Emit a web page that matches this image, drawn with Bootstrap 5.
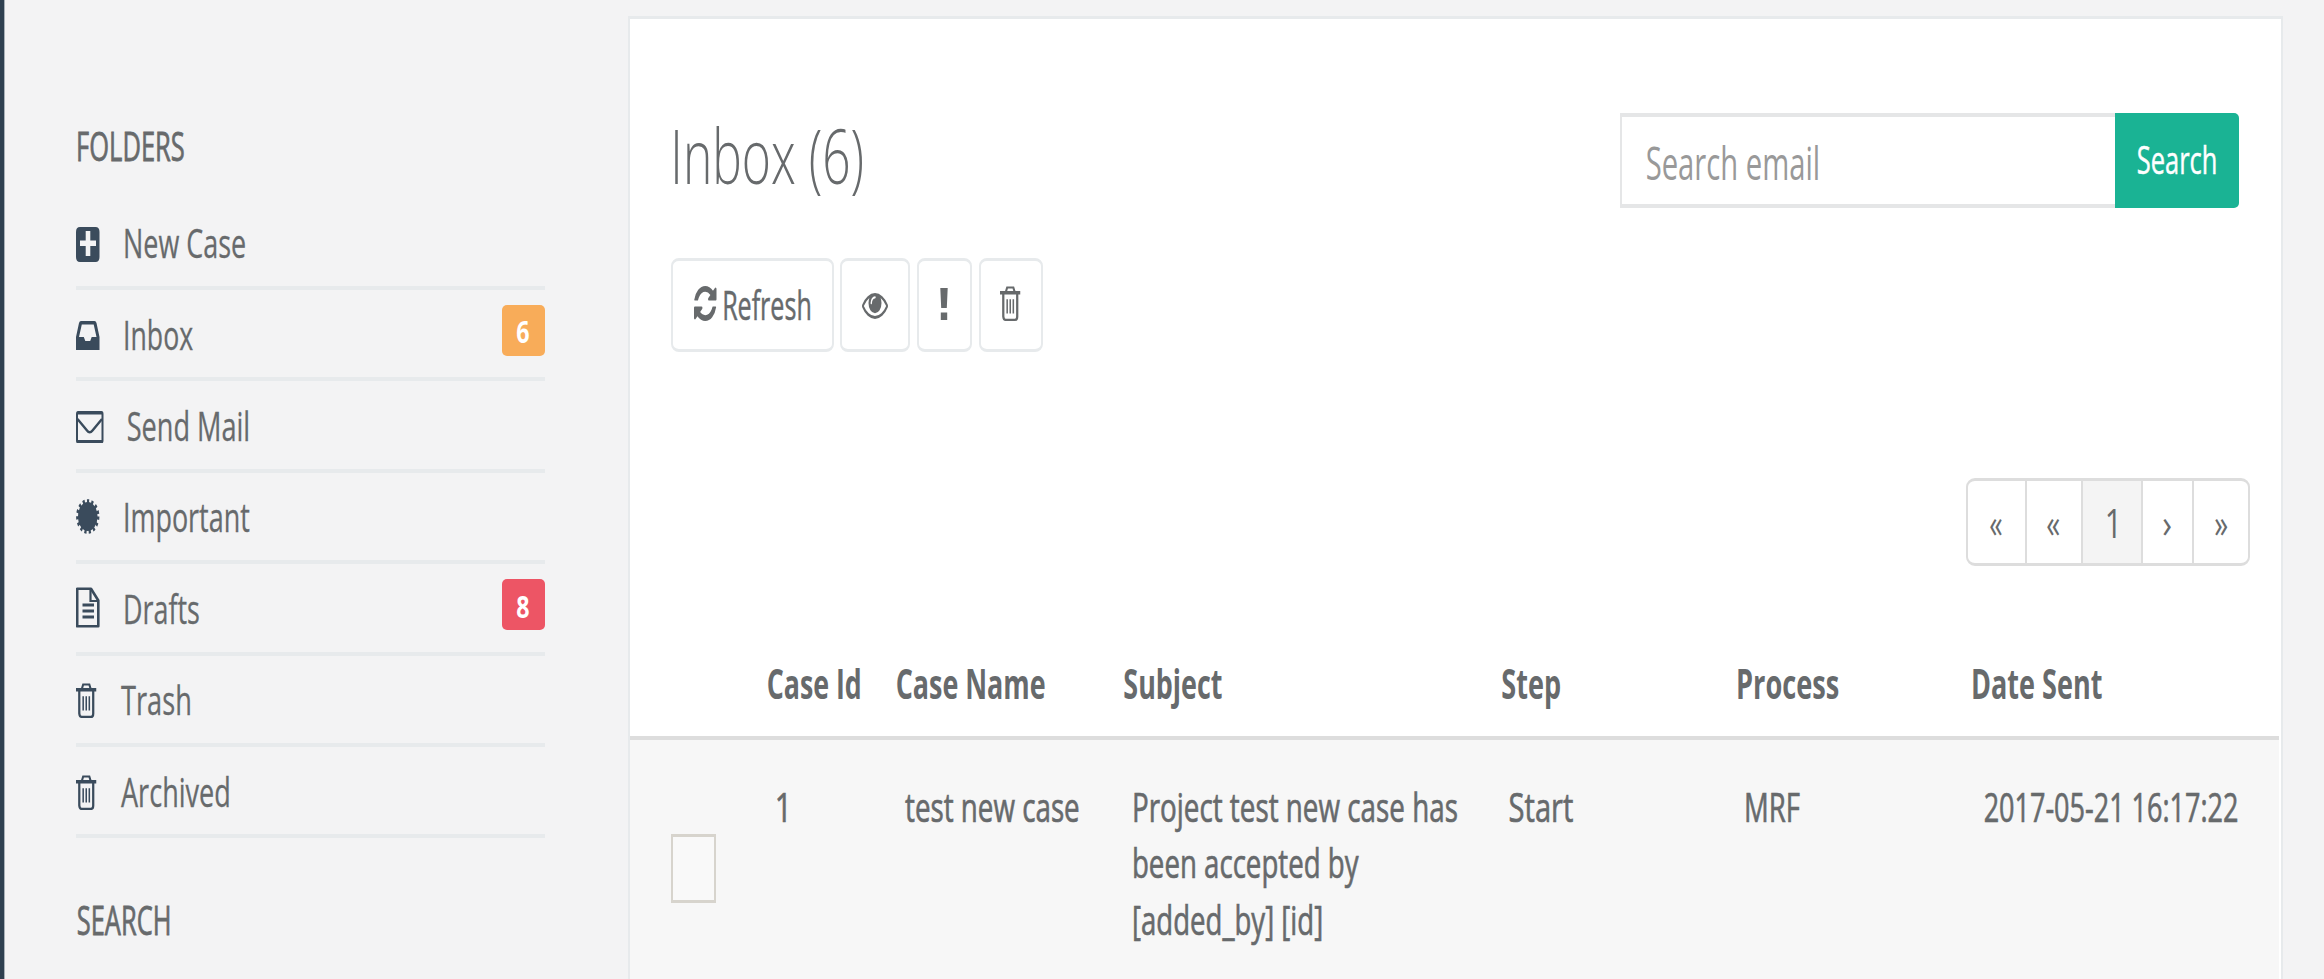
<!DOCTYPE html>
<html lang="en">
<head>
<meta charset="utf-8">
<title>Inbox</title>
<link rel="stylesheet" href="https://cdn.jsdelivr.net/npm/bootstrap@5.3.0/dist/css/bootstrap.min.css">
<style>
  body { background: #f3f3f4; color: #676a6c; font: 400 40.5px/56px "Open Sans", sans-serif; height: 979px; overflow: hidden; }
  .fit { display: inline-block; white-space: nowrap; transform-origin: 0 50%; }
  .rail { width: 5px; flex: none; background: #2f4050; border-right: 1px solid #a9b1b8; }
  .folders { width: 469px; margin: 117px 83px 0 71px; flex: none; }
  .folders h5 { font-size: inherit; line-height: 56px; font-weight: 400; -webkit-text-stroke: .8px; padding-left: 2px; margin: 0 0 25.6px; }
  .folders h5 + ul + h5 { margin: 52.4px 0 0; }
  .folders li { height: 91.4px; border-bottom: 4px solid #e7eaec; -webkit-text-stroke: .3px; }
  .folders svg { color: #3a4b5c; flex: none; }
  .tag { width: 43.5px; height: 50.4px; border-radius: 5px; margin-bottom: 6.5px; color: #fff; font-size: 31px; font-weight: 700; -webkit-text-stroke: 0; }
  .tag-warning { background: #f8ac59; }
  .tag-danger { background: #ed5565; }
  .mailbox { width: 1655px; height: 963px; overflow: hidden; margin-top: 16px; flex: none; background: #fff; border: 2px solid #e7eaec; border-width: 3px 2px 0; }
  .mail-head { padding: 94px 42.5px 0 45.2px; height: 189.6px; }
  .mail-head h2 { font-size: 75px; font-weight: 300; line-height: 82px; margin: 0; }
  .search-field { width: 495px; height: 95.2px; border: solid #e5e6e7; border-width: 4px 0 4px 2px; padding: 2px 0 0 25.5px; font-size: 45px; color: #999; }
  .search-go { width: 124px; height: 95.2px; background: #1ab394; border-radius: 0 5px 5px 0; border: 0; color: #fff; font-size: 39px; padding: 0 0 5px; -webkit-text-stroke: .5px; }
  .tools { margin: 49.1px 0 0 41px; gap: 6.7px; }
  .tool { height: 94.4px; border: solid #e7eaec; border-width: 3px 2px; border-radius: 8px; background: #fff; color: #676a6c; padding: 0 0 2px; -webkit-text-stroke: .5px; }
  .pager { height: 88.4px; margin: 126px 31px 0 0; border: solid #ddd; border-width: 3px 2px; border-radius: 9px; overflow: hidden; }
  .pager > div + div { border-left: 2px solid #ddd; }
  .pager .current { background: #f4f4f4; }
  .cases { width: 1649px; margin-top: 63.3px; table-layout: fixed; border-collapse: separate; border-spacing: 0; }
  .cases th { height: 110.5px; padding: 0; border-bottom: 4px solid #ddd; font-weight: 700; vertical-align: middle; }
  .cases td { height: 239px; padding: 37.3px 0 0 8px; background: #f7f7f7; vertical-align: top; line-height: 56.5px; -webkit-text-stroke: .7px; }
  .cases td:first-child { padding: 93.8px 0 0 41px; }
  .tick { width: 45px; height: 69px; border: solid #d7d4cd; border-width: 3px 2px; background: #f9f9f9; }
</style>
</head>
<body class="d-flex m-0">
<svg width="0" height="0" class="position-absolute">
  <symbol id="i-trash" viewBox="0 0 20 35" preserveAspectRatio="none">
    <path d="M5.500 6.500L7 1.500H13L14.500 6.500" fill="none" stroke="currentColor" stroke-width="2"/>
    <path d="M0 5H20V8.500H0Z" fill="currentColor"/>
    <path d="M3.200 8V30Q3.500 33.500 5.500 33.500H14.500Q16.800 33.500 16.800 30V8" fill="none" stroke="currentColor" stroke-width="2.200"/>
    <path d="M7 13V27M10 13V27M13 13V27" stroke="currentColor" stroke-width="1.500"/>
  </symbol>
</svg>
<div class="rail"></div>

<aside class="folders">
  <h5><span class="fit" data-w="106">FOLDERS</span></h5>
  <ul class="list-unstyled m-0">
    <li class="d-flex align-items-center">
      <svg width="23.500" height="35" viewBox="0 0 23.500 35" class="mt-1"><path fill="currentColor" fill-rule="evenodd" d="M4 0H19.500Q23.500 0 23.500 5V30Q23.500 35 19.500 35H4Q0 35 0 30V5Q0 0 4 0ZM9.700 4V13.500H4V19H9.700V29H14.300V19H20V13.500H14.300V4Z"/></svg>
      <span class="fit" data-w="120" data-x="25.500">New Case</span>
    </li>
    <li class="d-flex align-items-center">
      <svg width="23.500" height="29" viewBox="0 0 23.500 29" class="mt-1"><path fill="currentColor" fill-rule="evenodd" d="M5 0H18.500Q20 0 20.500 2L23.500 16V29H0V16L3 2Q3.500 0 5 0ZM5.800 3.500L3 16H7.800L9.300 20H14.200L15.700 16H20.500L17.700 3.500Z"/></svg>
      <span class="fit" data-w="68" data-x="25.500">Inbox</span>
      <span class="tag tag-warning ms-auto d-flex align-items-center justify-content-center"><span class="fit" data-w="12">6</span></span>
    </li>
    <li class="d-flex align-items-center">
      <svg width="27.500" height="32.500" viewBox="0 0 27.500 32.500" class="mt-1"><path fill="currentColor" fill-rule="evenodd" d="M2 0H25.500Q27.500 0 27.500 3V29.500Q27.500 32.500 25.500 32.500H2Q0 32.500 0 29.500V3Q0 0 2 0ZM2 3.500V29H25.500V3.500Z"/><path d="M1.500 8L11 19.500Q13.700 23 16.500 19.500L26 8" fill="none" stroke="currentColor" stroke-width="2.400"/></svg>
      <span class="fit" data-w="120" data-x="24.500">Send Mail</span>
    </li>
    <li class="d-flex align-items-center">
      <svg width="23.500" height="35" viewBox="-12 -12 24 24" preserveAspectRatio="none"><circle r="10" fill="currentColor"/><circle r="10.600" fill="none" stroke="currentColor" stroke-width="2.600" stroke-dasharray="2.220"/></svg>
      <span class="fit" data-w="124.500" data-x="25.500">Important</span>
    </li>
    <li class="d-flex align-items-center">
      <svg width="23.500" height="41" viewBox="0 0 23.500 41"><path d="M1.200 1.700H15L22.300 13.500V39.300H1.200Z" fill="none" stroke="currentColor" stroke-width="2.600" stroke-linejoin="round"/><path d="M14.500 2V14H22" fill="none" stroke="currentColor" stroke-width="2.200"/><path d="M6.500 18H18M6.500 24H18M6.500 30H18" stroke="currentColor" stroke-width="2.800"/></svg>
      <span class="fit" data-w="74" data-x="25.500">Drafts</span>
      <span class="tag tag-danger ms-auto d-flex align-items-center justify-content-center"><span class="fit" data-w="12">8</span></span>
    </li>
    <li class="d-flex align-items-center">
      <svg width="20.500" height="35.500" class="mt-1"><use href="#i-trash"/></svg>
      <span class="fit" data-w="69" data-x="24.500">Trash</span>
    </li>
    <li class="d-flex align-items-center">
      <svg width="20.500" height="35.500" class="mt-1"><use href="#i-trash"/></svg>
      <span class="fit" data-w="108" data-x="24.500">Archived</span>
    </li>
  </ul>
  <h5><span class="fit" data-w="91">SEARCH</span></h5>
</aside>

<main class="mailbox">
  <div class="mail-head d-flex justify-content-between">
    <h2><span class="fit" data-w="187.500">Inbox (6)</span></h2>
    <div class="d-flex">
      <div class="search-field d-flex align-items-center"><span class="fit" data-w="171">Search email</span></div>
      <button class="search-go d-flex align-items-center justify-content-center"><span class="fit" data-w="77.500">Search</span></button>
    </div>
  </div>

  <div class="tools d-flex">
    <button class="tool d-flex align-items-center justify-content-center" style="width:162.500px">
      <svg width="22.500" height="35" viewBox="128 128 1536 1536" preserveAspectRatio="none"><path fill="currentColor" d="M1639 1056q0 5-1 7-64 268-268 434.500t-478 166.500q-146 0-282.500-55t-243.500-157l-129 129q-19 19-45 19t-45-19-19-45v-448q0-26 19-45t45-19h448q26 0 45 19t19 45-19 45l-137 137q71 66 161 102t187 36q134 0 250-65t186-179q11-17 53-117 8-23 30-23h192q13 0 22.500 9.500t9.500 22.500zm25-800v448q0 26-19 45t-45 19h-448q-26 0-45-19t-19-45 19-45l138-138q-148-137-349-137-134 0-250 65t-186 179q-11 17-53 117-8 23-30 23h-199q-13 0-22.500-9.500t-9.500-22.500v-7q65-268 270-434.500t480-166.500q146 0 284 55.500t245 156.500l130-129q19-19 45-19t45 19 19 45z"/></svg>
      <span class="fit" data-w="86" data-x="7.500">Refresh</span>
    </button>
    <button class="tool d-flex align-items-center justify-content-center" style="width:70px">
      <svg width="26" height="26" viewBox="0 384 1792 1152" preserveAspectRatio="none" class="mt-1"><path fill="currentColor" d="M1664 960q-152-236-381-353 61 104 61 225 0 185-131.500 316.500t-316.500 131.500-316.500-131.500-131.500-316.500q0-121 61-225-229 117-381 353 133 205 333.500 326.500t434.500 121.500 434.500-121.500 333.500-326.500zm-720-384q0-20-14-34t-34-14q-125 0-214.500 89.500t-89.500 214.500q0 20 14 34t34 14 34-14 14-34q0-86 61-147t147-61q20 0 34-14t14-34zm848 384q0 34-20 69-140 230-376.500 368.500t-499.500 138.500-499.500-139-376.500-368q-20-35-20-69t20-69q140-229 376.500-368t499.500-139 499.500 139 376.500 368q20 35 20 69z"/></svg>
    </button>
    <button class="tool d-flex align-items-center justify-content-center" style="width:55px">
      <svg width="8" height="32" viewBox="0 0 8 32"><path fill="currentColor" d="M0.300 0H7.700L6.800 20H1.200ZM0.800 24.500H7.200V32H0.800Z"/></svg>
    </button>
    <button class="tool d-flex align-items-center justify-content-center" style="width:64px">
      <svg width="20.500" height="35.500"><use href="#i-trash"/></svg>
    </button>
  </div>

  <div class="d-flex justify-content-end">
    <div class="pager d-flex">
      <div class="d-flex align-items-center justify-content-center" style="width:56.500px"><span class="fit" data-w="12">«</span></div>
      <div class="d-flex align-items-center justify-content-center" style="width:56px"><span class="fit" data-w="12.500">«</span></div>
      <div class="current d-flex align-items-center justify-content-center" style="width:60px"><span class="fit" data-w="9">1</span></div>
      <div class="d-flex align-items-center justify-content-center" style="width:51.500px"><span class="fit" data-w="8">›</span></div>
      <div class="d-flex align-items-center justify-content-center" style="width:56px"><span class="fit" data-w="12.500">»</span></div>
    </div>
  </div>

  <table class="cases">
    <colgroup><col style="width:138px"><col style="width:129px"><col style="width:227px"><col style="width:378px"><col style="width:236px"><col style="width:235px"><col></colgroup>
    <thead>
      <tr>
        <th></th>
        <th><span class="fit" data-w="92">Case Id</span></th>
        <th><span class="fit" data-w="148">Case Name</span></th>
        <th><span class="fit" data-w="98">Subject</span></th>
        <th><span class="fit" data-w="58">Step</span></th>
        <th><span class="fit" data-w="100.500">Process</span></th>
        <th><span class="fit" data-w="129">Date Sent</span></th>
      </tr>
    </thead>
    <tbody>
      <tr>
        <td><div class="tick"></div></td>
        <td><span class="fit" data-w="9" data-x="1">1</span></td>
        <td><span class="fit" data-w="173.500">test new case</span></td>
        <td><span class="fit" data-w="323" data-x="2">Project test new case has</span><br><span class="fit" data-w="225" data-x="2">been accepted by</span><br><span class="fit" data-w="187" data-x="2">[added_by] [id]</span></td>
        <td><span class="fit" data-w="63">Start</span></td>
        <td><span class="fit" data-w="54">MRF</span></td>
        <td><span class="fit" data-w="252" data-x="4">2017-05-21 16:17:22</span></td>
      </tr>
    </tbody>
  </table>
</main>

<script src="https://cdn.jsdelivr.net/npm/bootstrap@5.3.0/dist/js/bootstrap.bundle.min.js"></script>
<script>
  // Condense each label to its data-w ink width; data-x is the gap before it.
  const pen = document.createElement('canvas').getContext('2d');
  document.querySelectorAll('.fit').forEach(el => {
    const cs = getComputedStyle(el), w = +el.dataset.w, x = +(el.dataset.x || 0);
    pen.font = `${cs.fontWeight} ${cs.fontSize} ${cs.fontFamily}`;
    const m = pen.measureText(el.textContent);
    const k = w / (m.actualBoundingBoxRight + m.actualBoundingBoxLeft);
    const full = el.getBoundingClientRect().width;
    el.style.flex = 'none';
    el.style.width = full + 'px';
    el.style.transform = `translate(${m.actualBoundingBoxLeft * k}px, 1px) scaleX(${k})`;
    el.style.marginLeft = x + 'px';
    el.style.marginRight = (w - full) + 'px';
  });
</script>
</body>
</html>
